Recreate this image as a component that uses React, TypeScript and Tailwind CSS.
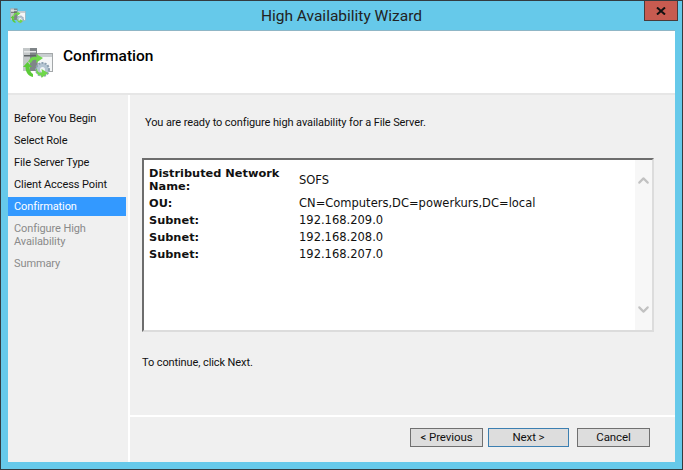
import { ChevronDown, ChevronUp } from "lucide-react";

const steps = [
  { label: "Before You Begin", state: "done" },
  { label: "Select Role", state: "done" },
  { label: "File Server Type", state: "done" },
  { label: "Client Access Point", state: "done" },
  { label: "Confirmation", state: "active" },
  { label: "Configure High Availability", state: "todo" },
  { label: "Summary", state: "todo" },
];

const details = [
  { label: "Distributed Network Name:", value: "SOFS" },
  { label: "OU:", value: "CN=Computers,DC=powerkurs,DC=local" },
  { label: "Subnet:", value: "192.168.209.0" },
  { label: "Subnet:", value: "192.168.208.0" },
  { label: "Subnet:", value: "192.168.207.0" },
];

const WizardIcon = ({ className }: { className: string }) => (
  <svg viewBox="0 0 32 32" className={className}>
    {/* server tower */}
    <rect x="1" y="1" width="14" height="23" fill="#7f8588" />
    <rect x="1" y="1" width="7" height="23" fill="#c3c7c8" />
    <rect x="2" y="4" width="12" height="1.5" fill="#e6e8e8" />
    <rect x="2" y="8" width="12" height="1.5" fill="#5f6466" />
    {/* window */}
    <rect x="15.5" y="6.5" width="15" height="18" fill="#f4f6f7" stroke="#a4a8aa" />
    <rect x="16" y="7" width="14" height="3" fill="#c9ced1" />
    {/* gear */}
    <circle cx="20.5" cy="22.5" r="6.5" fill="#b4c5d2" stroke="#8da0b0" strokeDasharray="2 1.2" strokeWidth="2" />
    <circle cx="20.5" cy="22.5" r="2.5" fill="#f1f4f6" />
    {/* arrows */}
    <path d="M6 15 C8 10 11 9 15 10 L14 7 L21 11 L14 16 L14.5 13 C12 12 10 13 9 16 Z" fill="#6fd84a" />
    <path d="M1 20 L5.5 15 L10 20 L7.5 20 C7.5 23 9 26 11 27 L11 30 C6 29 3.5 25 3.5 20 Z" fill="#5ccb38" />
    <path d="M15 22 C15.5 25 17 26 20 25.5 L19.5 22 L26 26 L19.5 31 L19.5 28.5 C16 29 14 26 14 22 Z" fill="#6fd84a" />
  </svg>
);

const Button = ({ label, primary, className }: { label: string; primary?: boolean; className: string }) => (
  <button
    className={`h-[19px] flex items-center justify-center bg-[#dddddd] border text-[11.5px] tracking-[-0.1px] text-[#111] ${
      primary ? "border-[#3c7fb1]" : "border-[#707070]"
    } ${className}`}
  >
    {label}
  </button>
);

export default function App() {
  return (
    <div className="w-[683px] h-[470px] flex flex-col bg-[#66c9ea] border border-[#333b40] font-['Roboto',sans-serif] overflow-hidden">
      {/* title bar */}
      <div className="h-[29px] shrink-0 grid grid-cols-[1fr_auto_1fr] items-start">
        <div className="pl-[9px] pt-[7px]">
          <WizardIcon className="w-4 h-4" />
        </div>
        <div className="pt-[5px] text-[15.5px] leading-5 text-[#222]">High Availability Wizard</div>
        <div className="flex justify-end pr-[4px]">
          <div className="w-[34px] h-[21px] -mt-px bg-[#c75b50] border border-[#4a3a3a] flex items-center justify-center">
            <svg viewBox="0 0 10 8" className="w-[10px] h-[8px]">
              <path d="M1 0.5 L9 7.5 M9 0.5 L1 7.5" stroke="#111" strokeWidth="2" />
            </svg>
          </div>
        </div>
      </div>

      {/* client area */}
      <div className="flex-1 mx-[7px] mb-[7px] flex flex-col bg-[#f0f0f0] border-t border-[#8fb6c6]">
        <div className="h-[64px] shrink-0 bg-white flex items-start pl-[14px] pt-[14px] gap-[9px] border-b-2 border-[#e6e6e6]">
          <WizardIcon className="w-8 h-8 mt-[2px]" />
          <div className="text-[15.5px] leading-5 font-medium text-black pt-[1px]">Confirmation</div>
        </div>

        <div className="flex-1 flex min-h-0">
          {/* steps */}
          <div className="w-[120px] shrink-0 pt-[14px] flex flex-col gap-[3px]">
            {steps.map((step) => (
              <div
                key={step.label}
                className={`px-[6px] text-[11px] leading-[13px] py-[3px] tracking-[-0.1px] ${
                  step.state === "active"
                    ? "bg-[#3399ff] text-white mr-[2px]"
                    : step.state === "todo"
                    ? "text-[#8a8a8a]"
                    : "text-[#111]"
                }`}
              >
                {step.label}
              </div>
            ))}
          </div>

          {/* content */}
          <div className="flex-1 flex flex-col border-l-2 border-white">
            <div className="flex-1 pl-[12px] pr-[21px]">
              <p className="pt-[20px] pl-[3px] text-[11px] tracking-[-0.1px] leading-4 text-[#111]">
                You are ready to configure high availability for a File Server.
              </p>
              <div className="mt-[27px] h-[174px] flex bg-white border-l-2 border-t-2 border-[#6d6d6d] border-r-2 border-b-2 border-r-[#dcdcdc] border-b-[#dcdcdc]">
                <div className="flex-1 pl-[5px] pt-[7px] font-['DejaVu_Sans',sans-serif] text-[11.5px] leading-[13px] text-[#111] grid grid-cols-[150px_1fr] gap-y-[4px] content-start">
                  {details.map((row, i) => (
                    <div key={i} className="contents">
                      <div className="font-bold text-[11.35px] pr-[4px]">{row.label}</div>
                      <div className="self-center">{row.value}</div>
                    </div>
                  ))}
                </div>
                <div className="w-[17px] bg-[#f7f7f7] flex flex-col items-center justify-between py-[12px] text-[#c2c2c2]">
                  <ChevronUp size={17} strokeWidth={3} />
                  <ChevronDown size={17} strokeWidth={3} />
                </div>
              </div>
              <p className="mt-[23px] text-[11px] tracking-[-0.1px] leading-4 text-[#111]">To continue, click Next.</p>
            </div>

            {/* buttons */}
            <div className="h-[47px] shrink-0 border-t-2 border-white flex items-start pt-[11px] pl-[280px]">
              <Button label="< Previous" className="w-[73px]" />
              <Button label="Next >" primary className="w-[81px] ml-[5px]" />
              <Button label="Cancel" className="w-[73px] ml-[8px]" />
            </div>
          </div>
        </div>
      </div>
    </div>
  );
}
